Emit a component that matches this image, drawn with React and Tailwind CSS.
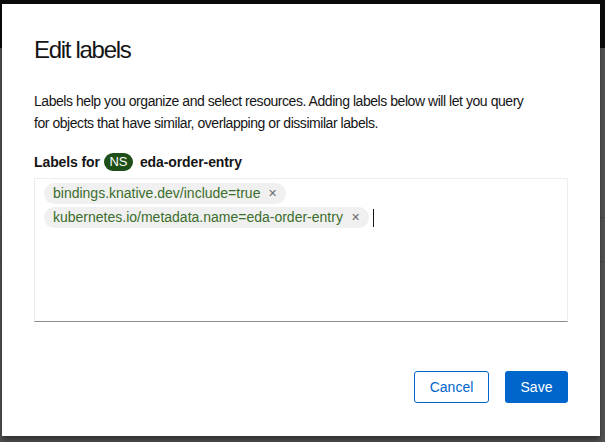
export default function App() {
  const font = { fontFamily: '"Liberation Sans", Arial, sans-serif' }
  return (
    <div className="relative w-[605px] h-[442px] overflow-hidden bg-[#545454]" style={font}>
      {/* backdrop: dimmed page behind the modal */}
      <div className="h-12 bg-[#0b0b0b]" />
      <div className="h-[170px] border-b border-[#484848]" />
      <div className="h-11 border-b border-[#484848]" />

      {/* modal */}
      <div className="absolute left-[2px] top-[4px] w-[598px] h-[432px] bg-white shadow-[0_4px_6px_rgba(0,0,0,0.45)] px-8 pt-[31px] text-[#151515]">
        <h1 className="text-[24px] leading-[30px] tracking-[-1.3px]">Edit labels</h1>

        <p className="mt-[25px] text-[14px] leading-[22px] tracking-[-0.45px]">
          Labels help you organize and select resources. Adding labels below will let you query
          <br />
          for objects that have similar, overlapping or dissimilar labels.
        </p>

        <div className="mt-[18px] flex items-center h-5 text-[14px] font-bold tracking-[-0.1px]">
          <span>Labels for</span>
          <span className="ml-[4px] inline-flex items-center justify-center w-[29px] h-[18px] rounded-full bg-[#1e4f18] text-white text-[13px] font-normal">
            NS
          </span>
          <span className="ml-[7px]">eda-order-entry</span>
        </div>

        <div className="mt-[6px] h-[144px] border border-[#ededed] border-b-[#8a8d90] px-[9px] pt-[4px]">
          <div className="flex flex-col items-start gap-[3px]">
            <Chip text="bindings.knative.dev/include=true" />
            <div className="flex items-center">
              <Chip text="kubernetes.io/metadata.name=eda-order-entry" />
              <span className="ml-[4px] w-px h-[18px] bg-[#151515]" />
            </div>
          </div>
        </div>

        <div className="mt-[49px] flex justify-end gap-4">
          <button className="w-[75px] h-8 rounded-[3px] border border-[#0066cc] text-[#0066cc] text-[14px]">
            Cancel
          </button>
          <button className="w-[63px] h-8 rounded-[3px] bg-[#0066cc] text-white text-[14px]">
            Save
          </button>
        </div>
      </div>
    </div>
  )
}

function Chip({ text }) {
  return (
    <span className="inline-flex items-center h-[21px] rounded-full bg-[#f0f0f0] pl-[9px] pr-[9px] text-[14px] text-[#3b6d2b]">
      <span>{text}</span>
      <span className="ml-[8px] text-[11px] text-[#6a6e73] leading-none">✕</span>
    </span>
  )
}
